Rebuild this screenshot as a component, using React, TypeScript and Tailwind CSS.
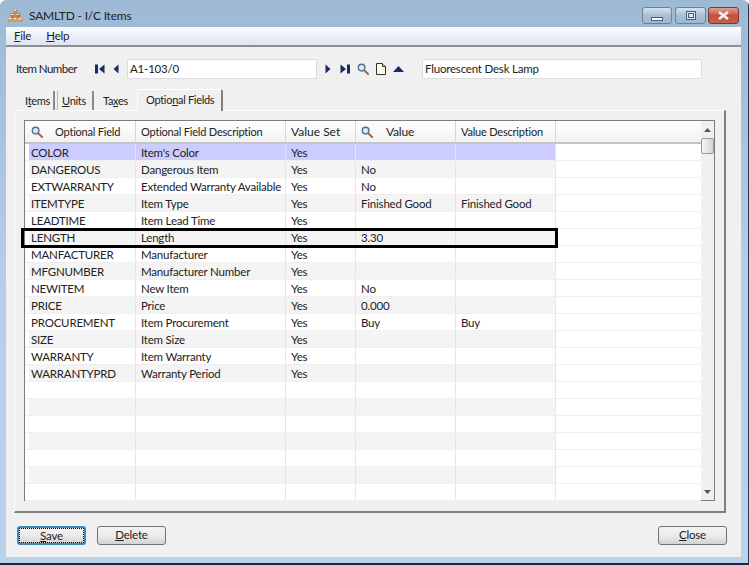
import React from "react";

const rows = [
  ["COLOR", "Item's Color", "Yes", "", ""],
  ["DANGEROUS", "Dangerous Item", "Yes", "No", ""],
  ["EXTWARRANTY", "Extended Warranty Available", "Yes", "No", ""],
  ["ITEMTYPE", "Item Type", "Yes", "Finished Good", "Finished Good"],
  ["LEADTIME", "Item Lead Time", "Yes", "", ""],
  ["LENGTH", "Length", "Yes", "3.30", ""],
  ["MANFACTURER", "Manufacturer", "Yes", "", ""],
  ["MFGNUMBER", "Manufacturer Number", "Yes", "", ""],
  ["NEWITEM", "New Item", "Yes", "No", ""],
  ["PRICE", "Price", "Yes", "0.000", ""],
  ["PROCUREMENT", "Item Procurement", "Yes", "Buy", "Buy"],
  ["SIZE", "Item Size", "Yes", "", ""],
  ["WARRANTY", "Item Warranty", "Yes", "", ""],
  ["WARRANTYPRD", "Warranty Period", "Yes", "", ""],
  ["", "", "", "", ""],
  ["", "", "", "", ""],
  ["", "", "", "", ""],
  ["", "", "", "", ""],
  ["", "", "", "", ""],
  ["", "", "", "", ""],
  ["", "", "", "", ""],
];

const colWidths = ["w-[107px]", "w-[150px]", "w-[70px]", "w-[100px]", "w-[100px]"];

const Magnifier = ({ className = "" }: { className?: string }) => (
  <svg viewBox="0 0 13 13" className={className}>
    <circle cx="5" cy="5" r="3.6" fill="#dbe9f6" stroke="#50708f" strokeWidth="1.5" />
    <path d="M7.8 7.8 L12 12" stroke="#9c6a5a" strokeWidth="2.2" strokeLinecap="round" />
  </svg>
);

const NavFirst = () => (
  <svg viewBox="0 0 10 10" className="w-[10px] h-[10px]">
    <path d="M0 0.5h3v9H0z M9.5 0.5v9L4 5z" fill="#17296b" />
  </svg>
);
const NavPrev = () => (
  <svg viewBox="0 0 6 10" className="w-[6px] h-[10px]">
    <path d="M5.5 0.5v9L0.5 5z" fill="#17296b" />
  </svg>
);
const NavNext = () => (
  <svg viewBox="0 0 6 10" className="w-[6px] h-[10px]">
    <path d="M0.5 0.5v9L5.5 5z" fill="#17296b" />
  </svg>
);
const NavLast = () => (
  <svg viewBox="0 0 10 10" className="w-[10px] h-[10px]">
    <path d="M0.5 0.5v9L6 5z M7 0.5h3v9H7z" fill="#17296b" />
  </svg>
);
const DocIcon = () => (
  <svg viewBox="0 0 10 12" className="w-[10px] h-[12px]">
    <path d="M0.5 0.5h6l3 3v8h-9z" fill="#fffde8" stroke="#333" />
    <path d="M6.5 0.5v3h3" fill="#ddd" stroke="#333" />
  </svg>
);
const UpIcon = () => (
  <svg viewBox="0 0 11 6" className="w-[11px] h-[6px]">
    <path d="M5.5 0L11 6H0z" fill="#17296b" />
  </svg>
);

const AppIcon = () => (
  <svg viewBox="0 0 15 13" className="w-[15px] h-[13px]">
    <path d="M5.5 0h4v4.5h-4z" fill="#c98a45" />
    <path d="M2.8 4.3h4.4v4.4H2.8z M7.8 4.3h4.4v4.4H7.8z" fill="#b97a38" />
    <path d="M0 8.5h4.7v4.5H0z M5.1 8.5h4.8v4.5H5.1z M10.3 8.5H15v4.5h-4.7z" fill="#d39a5c" />
    <path d="M6 .6h2.4v1.2H6z M3.4 4.9h2.4v1.2H3.4z M8.4 4.9h2.4v1.2H8.4z M.7 9.1h2.4v1.2H.7z M5.8 9.1h2.4v1.2H5.8z M11 9.1h2.4v1.2H11z" fill="#fbeedd" />
  </svg>
);

const Tab = ({ label, className }: { label: React.ReactNode; className: string }) => (
  <div className={`flex items-center whitespace-nowrap ${className}`}>{label}</div>
);

const FormButton = ({ children, focused }: { children: React.ReactNode; focused?: boolean }) => (
  <button
    className={`w-[69px] h-[19px] rounded-[3px] bg-gradient-to-b from-[#f4f4f4] via-[#ebebeb] to-[#d2d2d2] flex items-center justify-center text-[11.5px] text-[#222] ${
      focused ? "border-2 border-[#3f88b8]" : "border border-[#707070] pb-px"
    }`}
  >
    {focused ? (
      <span className="w-full h-full border border-dotted border-black flex items-center justify-center">{children}</span>
    ) : (
      children
    )}
  </button>
);

const App = () => {
  return (
    <div
      className="relative w-[749px] h-[565px] flex flex-col overflow-hidden rounded-t-md bg-gradient-to-b from-[#9db9d3] via-[#b5cfe8] to-[#b9d3ec] text-[#222] text-[11.5px] tracking-[-0.2px]"
      style={{ fontFamily: "Lato, 'Liberation Sans', sans-serif" }}
    >
      {/* title bar */}
      <div className="h-[27px] shrink-0 flex items-start pl-[8px] pr-[10px]">
        <div className="mt-[9px]">
          <AppIcon />
        </div>
        <span className="ml-[6px] mt-[8px] text-[12px] leading-[16px] text-[#222]">SAMLTD - I/C Items</span>
        <div className="ml-auto flex mt-[7px]">
          <div className="w-[30px] h-[17px] rounded-[3px] border border-[#6a8298] bg-gradient-to-b from-[#d5e2ee] via-[#a7c0d8] to-[#9db8d2] flex items-end justify-center pb-[2px]">
            <div className="w-[12px] h-[4px] bg-white border border-[#4f5f70]" />
          </div>
          <div className="ml-[3px] w-[31px] h-[17px] rounded-[3px] border border-[#6a8298] bg-gradient-to-b from-[#d5e2ee] via-[#a7c0d8] to-[#9db8d2] flex items-center justify-center">
            <div className="w-[10px] h-[9px] bg-[#dfe8f1] border border-[#4f5f70] p-px">
              <div className="w-full h-full border border-[#4f5f70]" />
            </div>
          </div>
          <div className="ml-[2px] w-[31px] h-[17px] rounded-[3px] border border-[#7a3a30] bg-gradient-to-b from-[#e0a092] via-[#c9503c] to-[#c0604c] flex items-center justify-center">
            <svg viewBox="0 0 13 9" className="w-[13px] h-[9px]">
              <path d="M2 1 L11 8 M11 1 L2 8" stroke="#f4f0ee" strokeWidth="2.6" />
            </svg>
          </div>
        </div>
      </div>

      <div className="ml-[6px] mr-[8px] flex-1 min-h-0 flex flex-col bg-[#f0f0f0]">
        {/* menu */}
        <div className="h-[20px] shrink-0 flex items-center gap-[15px] pl-[8px] bg-gradient-to-b from-[#fbfcfe] to-[#dde3f3] border-b-2 border-[#8f8f8f]">
          <span>
            <u>F</u>ile
          </span>
          <span>
            <u>H</u>elp
          </span>
        </div>

        {/* item number row */}
        <div className="h-[20px] shrink-0 mt-[12px] flex items-center pl-[10px]">
          <span className="w-[79px] tracking-[-0.55px]">Item Number</span>
          <NavFirst />
          <span className="ml-[8px] flex">
            <NavPrev />
          </span>
          <div className="ml-[8px] w-[190px] h-[20px] bg-white border border-[#dcdcdc] rounded-[2px] pl-[2px] flex items-center">
            A1-103/0
          </div>
          <span className="ml-[8px] flex">
            <NavNext />
          </span>
          <span className="ml-[9px] flex">
            <NavLast />
          </span>
          <Magnifier className="ml-[7px] w-[12px] h-[12px]" />
          <span className="ml-[7px] flex">
            <DocIcon />
          </span>
          <span className="ml-[7px] flex">
            <UpIcon />
          </span>
          <div className="ml-[18px] w-[280px] h-[20px] bg-white border border-[#dcdcdc] rounded-[2px] pl-[2px] flex items-center">
            Fluorescent Desk Lamp
          </div>
        </div>

        {/* tabs */}
        <div className="h-[21px] shrink-0 mt-[10px] flex items-end pl-[19px] relative z-10 text-[11px] tracking-[-0.3px]">
          <Tab
            className="w-[30px] h-[19px] border-r-2 border-[#8a8a8a] pt-[2px]"
            label={
              <span>
                I<u>t</u>ems
              </span>
            }
          />
          <Tab
            className="ml-[2px] w-[37px] h-[19px] pl-[4px] pt-[2px] border-l border-r-2 border-[#b8b8b8] border-r-[#8a8a8a]"
            label={
              <span>
                <u>U</u>nits
              </span>
            }
          />
          <Tab
            className="ml-px w-[42px] h-[19px] pl-[8px] pt-[2px]"
            label={
              <span>
                Ta<u>x</u>es
              </span>
            }
          />
          <Tab
            className="w-[86px] h-[22px] pl-[8px] pb-px bg-[#f0f0f0] border-t border-l border-white border-r-2 border-r-[#808080] rounded-t-[2px] -mb-px"
            label={
              <span>
                Optio<u>n</u>al Fields
              </span>
            }
          />
        </div>

        {/* tab panel */}
        <div className="ml-[8px] w-[712px] h-[403px] shrink-0 border-t border-l border-[#fbfbfb] border-r-2 border-b-2 border-r-[#808080] border-b-[#808080] pt-[9px] pl-[9px]">
          <div className="w-[691px] h-[381px] border border-[#7c7c7c] bg-white flex">
            <div className="w-[676px] shrink-0 flex flex-col">
              {/* header */}
              <div className="h-[23px] shrink-0 pl-[4px] flex bg-gradient-to-b from-white to-[#f2f2f2] border-b-2 border-[#c4c4c4] whitespace-nowrap text-[11px] tracking-[-0.2px]">
                <div className="w-[107px] border-r border-[#d6d6d6] flex items-center pl-[2px]">
                  <Magnifier className="w-[12px] h-[12px]" />
                  <span className="ml-[12px] pt-px">Optional Field</span>
                </div>
                <div className="w-[150px] border-r border-[#d6d6d6] flex items-center pl-[5px] pt-px">
                  Optional Field Description
                </div>
                <div className="w-[70px] border-r border-[#d6d6d6] flex items-center pl-[5px] text-[12px] tracking-normal">
                  Value Set
                </div>
                <div className="w-[100px] border-r border-[#d6d6d6] flex items-center pl-[5px]">
                  <Magnifier className="w-[12px] h-[12px]" />
                  <span className="ml-[13px] text-[12px]">Value</span>
                </div>
                <div className="w-[100px] border-r border-[#d6d6d6] flex items-center pl-[5px] pt-px">
                  Value Description
                </div>
              </div>
              {/* rows */}
              {rows.map((row, i) => (
                <div key={i} className="h-[17px] shrink-0 pl-[4px] flex border-b border-[#efefef]">
                  <div
                    className={`flex ${
                      i === 0 ? "bg-[#ccccff]" : i % 2 === 1 ? "bg-[#f4f4f4]" : "bg-white"
                    }`}
                  >
                    {row.map((cell, j) => (
                      <div
                        key={j}
                        className={`${colWidths[j]} h-[16px] pt-px leading-[16px] border-r border-[#e6e6e6] whitespace-nowrap overflow-hidden ${
                          j === 0 ? "pl-[2px]" : "pl-[5px]"
                        }`}
                      >
                        {cell}
                      </div>
                    ))}
                  </div>
                </div>
              ))}
            </div>
            {/* scrollbar */}
            <div className="w-[13px] shrink-0 bg-[#f0f0f0] flex flex-col items-center">
              <div className="h-[17px] w-full flex items-center justify-center">
                <svg viewBox="0 0 7 4" className="w-[7px] h-[4px]">
                  <path d="M3.5 0L7 4H0z" fill="#555" />
                </svg>
              </div>
              <div className="w-[13px] h-[16px] rounded-[2px] border border-[#9a9a9a] bg-gradient-to-r from-[#f6f6f6] to-[#d4d4d4]" />
              <div className="mt-auto h-[17px] w-full flex items-center justify-center">
                <svg viewBox="0 0 7 4" className="w-[7px] h-[4px]">
                  <path d="M0 0H7L3.5 4z" fill="#555" />
                </svg>
              </div>
            </div>
          </div>
        </div>

        {/* footer buttons */}
        <div className="mt-[13px] pl-[11px] pr-[14px] flex items-start">
          <FormButton focused>
            <span>
              <u>S</u>ave
            </span>
          </FormButton>
          <div className="ml-[11px]">
            <FormButton>
              <span>
                <u>D</u>elete
              </span>
            </FormButton>
          </div>
          <div className="ml-auto">
            <FormButton>
              <span>
                <u>C</u>lose
              </span>
            </FormButton>
          </div>
        </div>
      </div>
      <div className="h-[8px] shrink-0" />
      {/* highlight box drawn over the grid */}
      <div className="absolute left-[21px] top-[228px] w-[537px] h-[20px] border-[3px] border-black" />
      <div className="absolute left-0 bottom-0 w-[749px] h-[2px] bg-[#1b2b3a]" />
      <div className="absolute right-0 top-0 w-px h-[565px] bg-[#27364a]" />
    </div>
  );
};

export default App;
